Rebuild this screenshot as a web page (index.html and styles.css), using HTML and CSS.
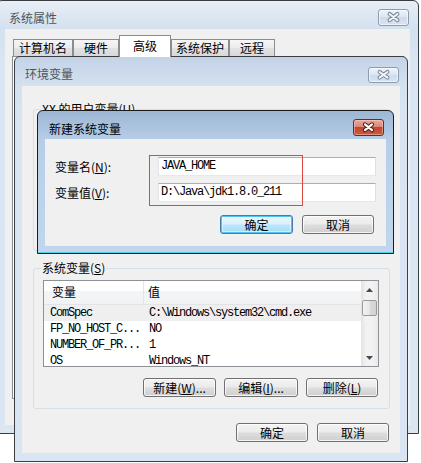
FILE: index.html
```html
<!DOCTYPE html>
<html lang="zh-CN">
<head>
<meta charset="utf-8">
<title>环境变量</title>
<link rel="stylesheet" href="styles.css">
</head>
<body>
<div class="win win1">
  <div class="tbar">
    <span class="ttl ttl1">系统属性</span>
    <span class="cls cls-in cls1">
      <svg width="31" height="17" viewBox="0 0 31 17"><path d="M11 4.5 L20 11.5 M20 4.5 L11 11.5" stroke="#7d8a9c" stroke-width="4.6" stroke-linecap="round"/><path d="M11 4.5 L20 11.5 M20 4.5 L11 11.5" stroke="#f2f5f9" stroke-width="2.2" stroke-linecap="round"/></svg>
    </span>
  </div>
  <div class="wbody w1body">
    <div class="tabs">
      <div class="tab tw1">计算机名</div>
      <div class="tab tw2">硬件</div>
      <div class="tab sel tw3">高级</div>
      <div class="tab tw4">系统保护</div>
      <div class="tab tw5">远程</div>
    </div>
    <div class="tabpanel"></div>
  </div>
</div>

<div class="win win2">
  <div class="tbar">
    <span class="ttl ttl2">环境变量</span>
    <span class="cls cls-in cls2">
      <svg width="31" height="16" viewBox="0 0 31 16"><path d="M11 4.5 L20 11 M20 4.5 L11 11" stroke="#7d8a9c" stroke-width="4.6" stroke-linecap="round"/><path d="M11 4.5 L20 11 M20 4.5 L11 11" stroke="#f2f5f9" stroke-width="2.2" stroke-linecap="round"/></svg>
    </span>
  </div>
  <div class="wbody w2body">
    <div class="group ugroup">
      <span class="glabel">XX 的用户变量(<u>U</u>)</span>
    </div>
    <div class="group sgroup">
      <span class="glabel">系统变量(<u>S</u>)</span>
      <div class="list">
        <div class="lmain">
          <div class="lhead">
            <div class="hc c1">变量</div>
            <div class="hc c2">值</div>
          </div>
          <div class="lrow selrow"><div class="rc c1">ComSpec</div><div class="rc c2">C:\Windows\system32\cmd.exe</div></div>
          <div class="lrow"><div class="rc c1">FP_NO_HOST_C...</div><div class="rc c2">NO</div></div>
          <div class="lrow"><div class="rc c1">NUMBER_OF_PR...</div><div class="rc c2">1</div></div>
          <div class="lrow"><div class="rc c1">OS</div><div class="rc c2">Windows_NT</div></div>
        </div>
        <div class="sb">
          <div class="sbtn"><svg width="7" height="4" viewBox="0 0 7 4"><path d="M3.5 0 L7 4 L0 4 Z" fill="#4a4a4a"/></svg></div>
          <div class="thumb"></div>
          <div class="sbfill"></div>
          <div class="sbtn"><svg width="7" height="4" viewBox="0 0 7 4"><path d="M0 0 L7 0 L3.5 4 Z" fill="#4a4a4a"/></svg></div>
        </div>
      </div>
      <div class="brow">
        <div class="btn bw73">新建(<u>W</u>)...</div>
        <div class="btn bw74">编辑(<u>I</u>)...</div>
        <div class="btn bw72">删除(<u>L</u>)</div>
      </div>
    </div>
    <div class="brow brow-bottom">
      <div class="btn bw72">确定</div>
      <div class="btn bw72">取消</div>
    </div>
  </div>
</div>

<div class="win win3">
  <div class="tbar">
    <span class="ttl ttl3">新建系统变量</span>
    <span class="cls cls-red">
      <svg width="31" height="17" viewBox="0 0 31 17"><path d="M11.5 5 L19.5 11.5 M19.5 5 L11.5 11.5" stroke="#5a1f1a" stroke-width="4.8" stroke-linecap="round"/><path d="M11.5 5 L19.5 11.5 M19.5 5 L11.5 11.5" stroke="#ffffff" stroke-width="2.4" stroke-linecap="round"/></svg>
    </span>
  </div>
  <div class="wbody w3body">
    <div class="form">
      <span class="flabel">变量名(<u>N</u>):</span>
      <div class="inp">JAVA_HOME</div>
      <span class="flabel">变量值(<u>V</u>):</span>
      <div class="inp">D:\Java\jdk1.8.0_211</div>
    </div>
    <div class="brow brow-dlg">
      <div class="btn bw73 def">确定</div>
      <div class="btn bw72">取消</div>
    </div>
  </div>
</div>

<div class="mark"></div>
</body>
</html>
```

FILE: styles.css
```css
* { box-sizing: border-box; }

html, body {
  margin: 0;
  width: 421px;
  height: 463px;
  overflow: hidden;
}

body {
  position: relative;
  background: #ffffff;
  font-family: "Noto Sans CJK SC", "Liberation Sans", sans-serif;
  font-size: 12px;
  color: #000;
}

u { text-decoration: underline; text-underline-offset: 1px; }

/* ---------- windows ---------- */
.win {
  position: absolute;
  border: 1px solid #3a3d42;
  border-radius: 6px 6px 0 0;
  display: flex;
  flex-direction: column;
}

.tbar {
  flex: none;
  display: flex;
  align-items: flex-start;
  justify-content: space-between;
}

.ttl { line-height: 14px; white-space: nowrap; }

.cls {
  display: block;
  border-radius: 3px;
  overflow: hidden;
}
.cls svg { display: block; }

.cls-in {
  border: 1px solid #8b9bb1;
  background: linear-gradient(#eef3f9, #dbe5f1 50%, #cfdbea 50%, #d8e3f0);
  box-shadow: inset 0 0 0 1px rgba(255,255,255,0.6);
}

.cls-red {
  border: 1px solid #6b2924;
  background: linear-gradient(#e9a99c, #dd8776 45%, #c4452f 50%, #c95a43 100%);
  box-shadow: inset 0 0 0 1px rgba(255,220,210,0.45);
}

.wbody { background: #f0f0f0; }

/* window 1: 系统属性 */
.win1 {
  left: -4px;
  top: 0;
  width: 423px;
  height: 434px;
  padding: 0 8px 8px 8px;
  background: linear-gradient(#e8eef6, #d3e0ee 28px, #d9e5f2 60px, #dbe6f2);
}
.win1 .tbar { height: 28px; }
.ttl1 { margin: 10px 0 0 4px; color: #4b5560; }
.cls1 { margin: 8px 1px 0 0; }
.cls1 svg { width: 29px; height: 15px; }

.w1body {
  flex: 1;
  padding: 6px 0 0 7px;
  display: flex;
  flex-direction: column;
}

.tabs {
  display: flex;
  align-items: flex-end;
  height: 21px;
  margin-left: 1px;
  position: relative;
  z-index: 1;
}
.tab {
  height: 17px;
  border: 1px solid #898c95;
  border-bottom: none;
  background: linear-gradient(#f6f6f6, #ececec 50%, #e2e2e2 50%, #d9d9d9);
  text-align: center;
  line-height: 16px;
}
.tab.sel {
  height: 22px;
  margin-bottom: -1px;
  background: #ffffff;
  line-height: 19px;
}
.tw1 { width: 60px; }
.tw2 { width: 46px; }
.tw3 { width: 52px; }
.tw4 { width: 58px; }
.tw5 { width: 46px; }

.tabpanel {
  flex: none;
  height: 343px;
  width: 392px;
  border: 1px solid #898c95;
  background: #ffffff;
}

/* window 2: 环境变量 */
.win2 {
  left: 14px;
  top: 56px;
  width: 394px;
  height: 406px;
  padding: 0 7px 8px 7px;
  background: linear-gradient(#c3d3e6, #d4e1ef 29px, #d8e4f1 60px, #d9e5f2);
}
.win2 .tbar { height: 29px; }
.ttl2 { margin: 10px 0 0 3px; color: #4b5560; }
.cls2 { margin: 10px 1px 0 0; }
.cls2 svg { width: 29px; height: 14px; }

.w2body {
  flex: 1;
  display: flex;
  flex-direction: column;
}

.group {
  flex: none;
  width: 357px;
  margin-left: 11px;
  border: 1px solid #d5dfe5;
  border-radius: 3px;
  display: flex;
  flex-direction: column;
  align-items: flex-start;
}
.glabel {
  margin: -8px 0 0 7px;
  padding: 0 1px;
  line-height: 14px;
  background: #f0f0f0;
  white-space: nowrap;
}
.ugroup { margin-top: 23px; height: 142px; }
.sgroup { margin-top: 17px; padding-bottom: 11px; }

/* list view */
.list {
  margin: 5px 0 0 9px;
  width: 336px;
  height: 87px;
  border: 1px solid #8e9197;
  background: #fff;
  display: flex;
  overflow: hidden;
}
.lmain { flex: 1; overflow: hidden; }
.lhead {
  height: 24px;
  display: flex;
  background: linear-gradient(#ffffff 45%, #f4f5f7 45%, #f1f2f4);
  border-bottom: 1px solid #e2e4e7;
}
.hc { line-height: 22px; white-space: nowrap; }
.hc.c1 { width: 100px; padding-left: 8px; border-right: 1px solid #e3e4e6; }
.hc.c2 { padding-left: 4px; }

.mono {
  font-family: "Liberation Mono", "DejaVu Sans Mono", monospace;
}

.lrow {
  height: 16px;
  display: flex;
  font-family: "Liberation Mono", "DejaVu Sans Mono", monospace;
  font-size: 12px;
  letter-spacing: -1.2px;
  line-height: 16px;
  white-space: nowrap;
}
.selrow { background: #efefef; }
.rc.c1 { width: 100px; padding-left: 6px; }
.rc.c2 { padding-left: 5px; }

.sb {
  width: 17px;
  flex: none;
  display: flex;
  flex-direction: column;
  align-items: center;
  background: linear-gradient(90deg, #e3e3e3, #f2f2f2 30%, #f2f2f2 70%, #e9e9e9);
}
.sbtn {
  width: 17px;
  height: 17px;
  display: flex;
  align-items: center;
  justify-content: center;
}
.sbtn svg { display: block; }
.thumb {
  width: 15px;
  height: 16px;
  margin-top: 2px;
  border: 1px solid #9a9a9a;
  border-radius: 2px;
  background: linear-gradient(90deg, #f3f3f3, #e6e6e6 50%, #d9d9d9 50%, #d2d2d2);
}
.sbfill { flex: 1; }

/* buttons */
.brow {
  display: flex;
  justify-content: flex-end;
  align-self: stretch;
  gap: 8px;
  margin-top: 11px;
  padding-right: 11px;
}
.brow-bottom { margin-top: 14px; gap: 9px; }
.brow-dlg { margin-top: 13px; gap: 9px; padding-right: 12px; }

.btn {
  height: 19px;
  border: 1px solid #707070;
  border-radius: 3px;
  background: linear-gradient(#f3f3f3, #ebebeb 48%, #dddddd 52%, #cfcfcf);
  box-shadow: inset 0 0 0 1px rgba(255,255,255,0.75);
  text-align: center;
  line-height: 17px;
  white-space: nowrap;
}
.btn.def {
  border-color: #3c7fb1;
  background: linear-gradient(#eaf6fd, #d9f0fc 48%, #bee6fd 52%, #a7d9f5);
  box-shadow: inset 0 0 0 1px #4fc3ef, inset 0 0 0 2px rgba(255,255,255,0.5);
}
.bw72 { width: 72px; }
.bw73 { width: 73px; }
.bw74 { width: 74px; }

/* window 3: 新建系统变量 */
.win3 {
  left: 37px;
  top: 110px;
  width: 357px;
  height: 144px;
  padding: 0 7px 7px 7px;
  background: linear-gradient(#9cb6d3, #b6cde6 28px, #bad1ea 60px, #c1d6ed);
  border-color: #1c1c1c;
  box-shadow: inset 0 -1px 0 #4fd0e8;
}
.win3 .tbar { height: 28px; }
.ttl3 { margin: 11px 0 0 4px; color: #000; }
.cls-red { margin: 8px 2px 0 0; }
.cls-red svg { width: 29px; height: 15px; }

.w3body {
  flex: 1;
  padding: 18px 0 0 10px;
  display: flex;
  flex-direction: column;
}
.form {
  display: grid;
  grid-template-columns: 103px 218px;
  grid-template-rows: 19px 19px;
  row-gap: 7px;
  align-items: center;
}
.flabel { line-height: 14px; white-space: nowrap; }
.inp {
  height: 19px;
  border: 1px solid #abadb3;
  border-color: #abadb3 #dbdfe6 #e3e9ef #e2e3ea;
  background: #fff;
  padding-left: 2px;
  font-family: "Liberation Mono", "DejaVu Sans Mono", monospace;
  font-size: 12px;
  letter-spacing: -1.2px;
  line-height: 17px;
  white-space: nowrap;
}

/* annotation rectangle drawn over the dialog */
.mark {
  position: absolute;
  left: 149px;
  top: 155px;
  width: 154px;
  height: 51px;
  border: 1px solid #e0473f;
}
```
